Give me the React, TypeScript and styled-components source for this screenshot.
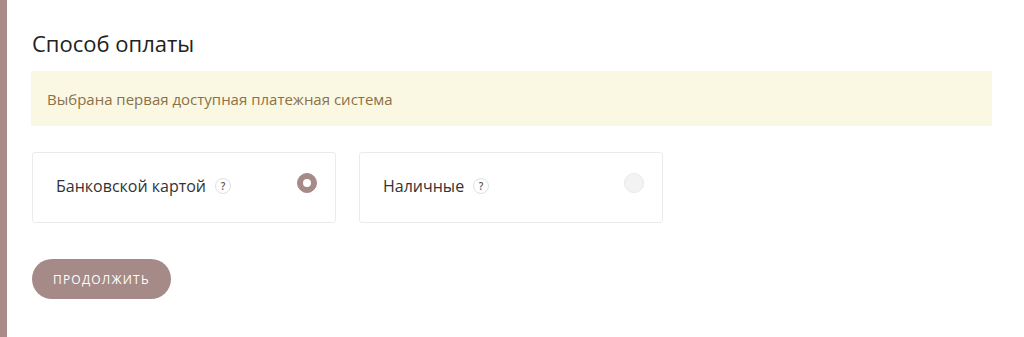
import React, { useState } from 'react';
import styled, { createGlobalStyle } from 'styled-components';

const GlobalStyle = createGlobalStyle`
    html, body {
        margin: 0;
        padding: 0;
        background: #fff;
        font-family: 'Open Sans', 'Noto Sans', sans-serif;
    }
`;

const Page = styled.div`
    display: flex;
    height: 337px;
    overflow: hidden;
`;

const SideBar = styled.div`
    flex: 0 0 7px;
    background: #a98b88;
`;

const Content = styled.main`
    flex: 1;
    padding: 29px 32px 0 25px;
`;

const Title = styled.h2`
    margin: 0 0 14px 0;
    font-size: 22px;
    font-weight: 500;
    color: #222;
    line-height: 28px;
`;

const Alert = styled.div`
    margin-left: -1px;
    background: #faf8e3;
    color: #8a7148;
    font-size: 15px;
    padding: 0 16px;
    height: 55px;
    display: flex;
    align-items: center;
`;

const Options = styled.div`
    display: flex;
    gap: 23px;
    margin-top: 26px;
`;

const Card = styled.label`
    box-sizing: border-box;
    width: 304px;
    height: 71px;
    border: 1px solid #ebebeb;
    border-radius: 3px;
    display: flex;
    align-items: center;
    padding: 0 18px 4px 23px;
    cursor: pointer;
`;

const Label = styled.span`
    font-size: 16px;
    color: #333;
`;

const Hint = styled.span`
    box-sizing: border-box;
    width: 16px;
    height: 16px;
    border-radius: 50%;
    border: 1px solid #e0e0e0;
    margin-left: 9px;
    margin-top: 1px;
    font-size: 10px;
    font-weight: 600;
    color: #555;
    display: inline-flex;
    align-items: center;
    justify-content: center;
`;

const Radio = styled.span<{ checked: boolean }>`
    box-sizing: border-box;
    margin-left: auto;
    margin-top: -5px;
    width: 20px;
    height: 20px;
    border-radius: 50%;
    background: ${({ checked }) => (checked ? '#a58a87' : '#f3f3f3')};
    border: 1px solid ${({ checked }) => (checked ? '#a58a87' : '#e9e9e9')};
    display: flex;
    align-items: center;
    justify-content: center;
    &::after {
        content: '';
        width: 8px;
        height: 8px;
        border-radius: 50%;
        background: #fff;
        display: ${({ checked }) => (checked ? 'block' : 'none')};
    }
`;

const Submit = styled.button`
    margin-top: 36px;
    height: 40px;
    padding: 0 21px;
    border: none;
    border-radius: 20px;
    background: #a58a87;
    color: #fff;
    font-family: inherit;
    font-size: 12px;
    font-weight: 500;
    letter-spacing: 1.2px;
    text-transform: uppercase;
    cursor: pointer;
`;

const methods = [
    { id: 'card', name: 'Банковской картой' },
    { id: 'cash', name: 'Наличные' },
];

const App: React.FC = () => {
    const [selected, setSelected] = useState('card');

    return (
        <>
            <GlobalStyle />
            <Page>
                <SideBar />
                <Content>
                    <Title>Способ оплаты</Title>
                    <Alert>Выбрана первая доступная платежная система</Alert>
                    <Options>
                        {methods.map((m) => (
                            <Card key={m.id} onClick={() => setSelected(m.id)}>
                                <Label>{m.name}</Label>
                                <Hint>?</Hint>
                                <Radio checked={selected === m.id} />
                            </Card>
                        ))}
                    </Options>
                    <Submit>Продолжить</Submit>
                </Content>
            </Page>
        </>
    );
};

export default App;
